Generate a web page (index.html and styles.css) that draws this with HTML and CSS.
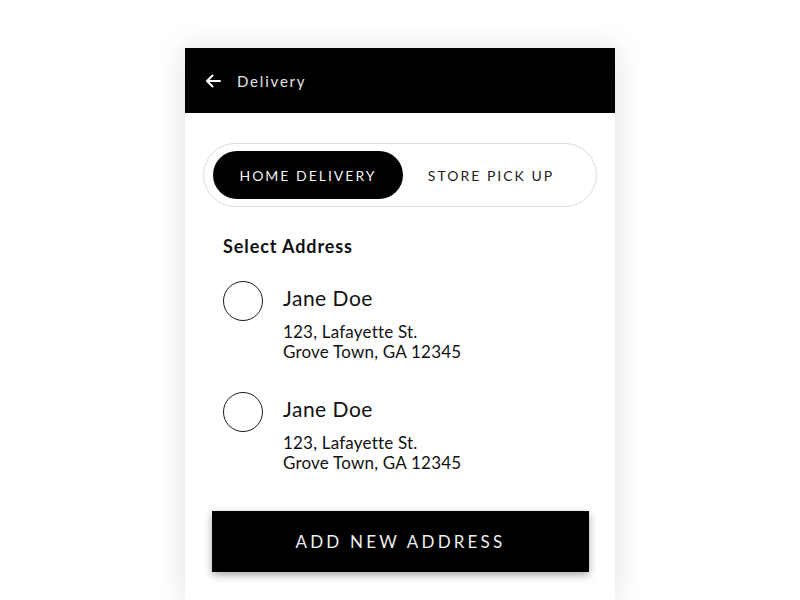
FILE: index.html
```html
<!DOCTYPE html>
<html>
<head>
<meta charset="utf-8">
<link rel="stylesheet" href="styles.css">
</head>
<body>
<div class="stage">
  <div class="card">
    <header class="topbar">
      <svg class="back" width="16" height="14" viewBox="0 0 16 14">
        <path d="M15 7H2M7.5 1.5L2 7l5.5 5.5" fill="none" stroke="#fff" stroke-width="2" stroke-linecap="round" stroke-linejoin="round"/>
      </svg>
      <span class="title">Delivery</span>
    </header>
    <main class="content">
      <div class="toggle">
        <div class="opt active">HOME DELIVERY</div>
        <div class="opt">STORE PICK UP</div>
      </div>
      <h2 class="section">Select Address</h2>
      <div class="addr">
        <div class="radio"></div>
        <div class="info">
          <div class="name">Jane Doe</div>
          <div class="lines">123, Lafayette St.<br>Grove Town, GA 12345</div>
        </div>
      </div>
      <div class="addr">
        <div class="radio"></div>
        <div class="info">
          <div class="name">Jane Doe</div>
          <div class="lines">123, Lafayette St.<br>Grove Town, GA 12345</div>
        </div>
      </div>
      <button class="add">ADD NEW ADDRESS</button>
    </main>
  </div>
</div>
</body>
</html>
```
FILE: styles.css
```css
* { box-sizing: border-box; }
html, body { margin: 0; padding: 0; background: #fff; }
body { font-family: "Lato", "Open Sans", sans-serif; color: #111; overflow: hidden; }
.stage { width: 800px; height: 600px; display: flex; justify-content: center; padding-top: 48px; overflow: hidden; }
.card {
  width: 430px; height: 552px; flex: none; background: #fff;
  box-shadow: 0 0 28px rgba(0,0,0,0.13);
  display: flex; flex-direction: column;
}
.topbar {
  height: 65px; background: #000; display: flex; align-items: center;
  padding-left: 20px; gap: 16px;
}
.back { display: block; }
.title { color: #e6e6e6; font-size: 15px; letter-spacing: 1.8px; }
.content { padding: 30px 18px 0 18px; display: flex; flex-direction: column; }
.toggle {
  height: 64px; border: 1px solid #dcdcdc; border-radius: 32px;
  display: flex; align-items: center; padding: 0 9px;
}
.opt {
  height: 48px; border-radius: 24px; display: flex; align-items: center; justify-content: center;
  font-size: 14px; letter-spacing: 2px; color: #222;
}
.opt.active { width: 190px; background: #000; color: #f2f2f2; }
.opt:not(.active) { flex: 1; padding-right: 8px; }
.section { margin: 29px 0 0 20px; font-size: 18px; font-weight: 700; letter-spacing: 0.9px; line-height: 20px; }
.addr { display: flex; margin: 25px 0 0 20px; gap: 20px; }
.addr + .addr { margin-top: 30px; }
.radio { width: 40px; height: 40px; border-radius: 50%; border: 1.5px solid #1a1a1a; flex: none; }
.name { font-size: 21px; line-height: 24px; margin-top: 5px; letter-spacing: 0.5px; }
.lines { font-size: 17px; line-height: 20px; margin-top: 12px; color: #111; letter-spacing: 0.2px; }
.add {
  margin: 38px 8px 0 9px; height: 61px; background: #000; color: #eee; border: none;
  font-family: inherit; font-size: 17px; letter-spacing: 3.2px;
  box-shadow: 0 3px 8px rgba(0,0,0,0.35);
}
```
